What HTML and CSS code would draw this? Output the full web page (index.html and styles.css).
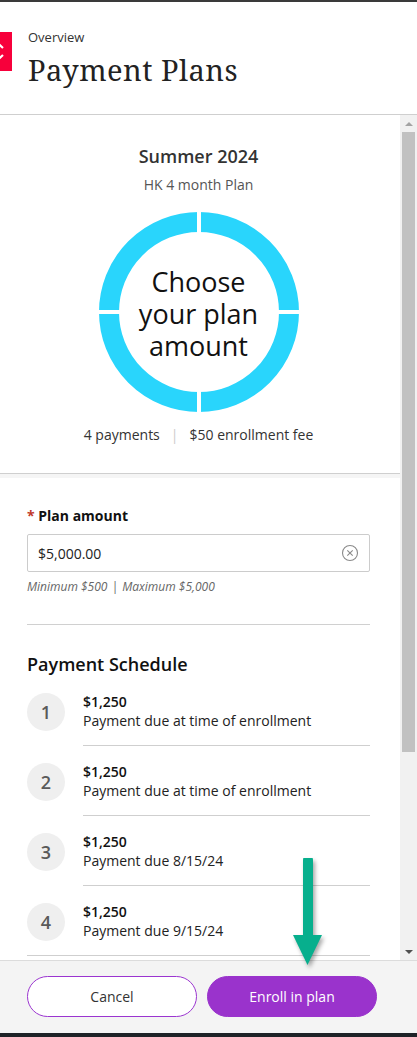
FILE: index.html
```html
<!DOCTYPE html>
<html>
<head>
<meta charset="utf-8">
<link rel="stylesheet" href="styles.css">
</head>
<body>
<div class="page">
  <div class="topbar"></div>
  <header class="header">
    <div class="redtab">
      <svg width="12" height="39" viewBox="0 0 12 39"><path d="M-6 8 L3 16 M-6 31 L3 23" stroke="#fff" stroke-width="2.2" fill="none"/></svg>
    </div>
    <div class="titles">
      <div class="crumb">Overview</div>
      <h1 class="title">Payment Plans</h1>
    </div>
  </header>
  <main class="main">
    <div class="content">
      <section class="summary">
        <div class="term">Summer 2024</div>
        <div class="plan">HK 4 month Plan</div>
        <div class="donut">
          <svg class="ring" width="200" height="200" viewBox="0 0 200 200">
            <circle cx="100" cy="100" r="90" fill="none" stroke="#29d5fc" stroke-width="20"/>
            <rect x="98" y="0" width="4" height="200" fill="#fff"/>
            <rect x="0" y="98" width="200" height="4" fill="#fff"/>
          </svg>
          <div class="donut-text">Choose your plan amount</div>
        </div>
        <div class="meta"><span>4 payments</span><span class="sep">|</span><span>$50 enrollment fee</span></div>
      </section>
      <div class="strip"></div>
      <section class="form">
        <label class="label"><span class="req">*</span> Plan amount</label>
        <div class="input">
          <span class="value">$5,000.00</span>
          <svg class="clear" width="18" height="18" viewBox="0 0 18 18"><circle cx="9" cy="9" r="7.5" fill="none" stroke="#8a8a8a" stroke-width="1.1"/><path d="M6.3 6.3 L11.7 11.7 M11.7 6.3 L6.3 11.7" stroke="#8a8a8a" stroke-width="1.1"/></svg>
        </div>
        <div class="help">Minimum $500 <span class="hsep">|</span> Maximum $5,000</div>
        <div class="divider"></div>
        <h2 class="sched">Payment Schedule</h2>
        <ul class="list">
          <li class="item"><div class="num">1</div><div class="txt"><div class="amt">$1,250</div><div class="desc">Payment due at time of enrollment</div></div></li>
          <li class="item"><div class="num">2</div><div class="txt"><div class="amt">$1,250</div><div class="desc">Payment due at time of enrollment</div></div></li>
          <li class="item"><div class="num">3</div><div class="txt"><div class="amt">$1,250</div><div class="desc">Payment due 8/15/24</div></div></li>
          <li class="item last"><div class="num">4</div><div class="txt"><div class="amt">$1,250</div><div class="desc">Payment due 9/15/24</div></div></li>
        </ul>
      </section>
    </div>
    <div class="scrollbar">
      <div class="sb-btn"><span class="tri-up"></span></div>
      <div class="thumb"></div>
      <div class="sb-space"></div>
      <div class="sb-btn"><span class="tri-down"></span></div>
    </div>
  </main>
  <footer class="footer">
    <button class="btn cancel">Cancel</button>
    <button class="btn enroll">Enroll in plan</button>
  </footer>
  <div class="bottombar"></div>
  <svg class="arrow" width="40" height="116" viewBox="0 0 40 116">
    <path d="M16 2 L16 77" stroke="#07af8d" stroke-width="10" stroke-linecap="round" fill="none"/>
    <path d="M1 77 L30 77 L15.5 107 Z" fill="#07af8d"/>
  </svg>
</div>
</body>
</html>
```
FILE: styles.css
```css
* { box-sizing: border-box; }
html, body { margin: 0; padding: 0; }
body {
  font-family: "Open Sans", "Noto Sans", "DejaVu Sans", sans-serif;
  color: #222;
  background: #fff;
}
.page {
  position: relative;
  width: 417px;
  height: 1037px;
  display: flex;
  flex-direction: column;
  overflow: hidden;
}
.topbar { height: 2px; background: #3a3a3a; flex: none; }
.header {
  flex: none;
  height: 113px;
  border-bottom: 1px solid #cfcfcf;
  display: flex;
  align-items: flex-start;
  padding-top: 26px;
}
.redtab {
  width: 12px;
  height: 39px;
  margin-top: 4px;
  background: #f7003b;
  flex: none;
  display: flex;
}
.titles { margin-left: 16px; }
.crumb { font-size: 13px; line-height: 18px; color: #333; }
.title {
  margin: 4px 0 0;
  font-family: "Noto Serif", "DejaVu Serif", "Liberation Serif", serif;
  font-weight: 400;
  font-size: 29px;
  line-height: 39px;
  color: #222;
  letter-spacing: 0.5px;
}
.main {
  flex: none;
  height: 845px;
  display: flex;
}
.content {
  width: 400px;
  overflow: hidden;
}
.summary {
  padding: 29px 30px 28px 27px;
  border-bottom: 1px solid #cfcfcf;
  display: flex;
  flex-direction: column;
  align-items: center;
}
.term { font-size: 18px; font-weight: 600; line-height: 25px; color: #333; }
.plan { font-size: 14px; line-height: 19px; color: #555; margin-top: 6px; }
.donut {
  margin-top: 18px;
  width: 200px;
  height: 200px;
  display: grid;
  place-items: center;
}
.ring, .donut-text { grid-area: 1 / 1; }
.donut-text {
  width: 140px;
  padding-top: 4px;
  text-align: center;
  font-size: 27px;
  line-height: 32px;
  color: #111;
}
.meta { margin-top: 13px; font-size: 14px; line-height: 20px; color: #333; }
.sep { color: #ccc; margin: 0 11px; }
.strip { height: 4px; background: #f5f5f5; }
.form { padding: 28px 30px 0 27px; }
.label { display: block; font-size: 14px; font-weight: 700; line-height: 20px; color: #111; }
.req { color: #c0392b; font-weight: 700; margin-right: 0; }
.input {
  margin-top: 8px;
  height: 38px;
  border: 1px solid #cccccc;
  border-radius: 2px;
  display: flex;
  align-items: center;
  justify-content: space-between;
  padding: 0 10px 0 10px;
}
.value { font-size: 14px; color: #222; }
.clear { display: block; }
.help { margin-top: 6px; font-size: 12px; line-height: 17px; font-style: italic; color: #666; }
.hsep { margin: 0 1px; }
.divider { margin-top: 29px; height: 1px; background: #d0d0d0; }
.sched { margin: 27px 0 0; font-size: 18px; font-weight: 600; line-height: 25px; color: #111; }
.list { list-style: none; margin: 0; padding: 0; border-bottom: 1px solid #cfcfcf; }
.item { display: flex; align-items: flex-start; }
.num {
  flex: none;
  width: 38px;
  height: 38px;
  margin-top: 16px;
  border-radius: 50%;
  background: #efefef;
  display: flex;
  align-items: center;
  justify-content: center;
  font-size: 18px;
  font-weight: 600;
  color: #5a5a5a;
}
.txt {
  flex: 1;
  margin-left: 18px;
  padding: 15px 0 14px;
  border-bottom: 1px solid #cfcfcf;
}
.item + .item .num { margin-top: 17px; }
.item + .item .txt { padding-top: 16px; }
.item.last .txt { border-bottom: none; }
.amt { font-size: 14px; font-weight: 600; line-height: 19px; color: #111; }
.desc { font-size: 14px; line-height: 20px; color: #222; }
.scrollbar {
  width: 17px;
  background: #f1f1f1;
  display: flex;
  flex-direction: column;
}
.sb-btn { height: 17px; display: flex; align-items: center; justify-content: center; flex: none; }
.tri-up { width: 0; height: 0; border-left: 4px solid transparent; border-right: 4px solid transparent; border-bottom: 4px solid #a3a3a3; }
.tri-down { width: 0; height: 0; border-left: 4px solid transparent; border-right: 4px solid transparent; border-top: 4px solid #505050; }
.thumb { height: 620px; margin: 0 2px; background: #c1c1c1; flex: none; }
.sb-space { flex: 1; }
.footer {
  flex: none;
  height: 73px;
  border-top: 1px solid #dcdcdc;
  background: #f4f4f4;
  display: flex;
  gap: 10px;
  padding: 15px 0 0 27px;
}
.btn {
  width: 170px;
  height: 41px;
  border-radius: 21px;
  font-family: "Open Sans", "Noto Sans", sans-serif;
  font-size: 14px;
  cursor: pointer;
}
.cancel { background: #fff; border: 1px solid #9b35d0; color: #333; }
.enroll { background: #9a33cc; border: 1px solid #9a33cc; color: #fff; }
.bottombar { flex: none; height: 4px; background: #1e2227; }
.arrow {
  position: absolute;
  left: 292px;
  top: 858px;
  filter: drop-shadow(2px 3px 2px rgba(0,0,0,0.35));
}
```
